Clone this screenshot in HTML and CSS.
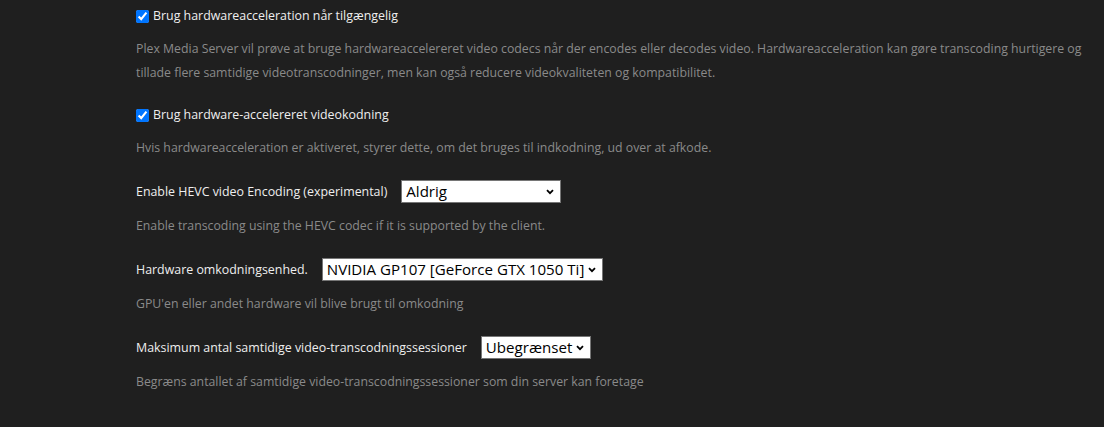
FILE: index.html
```html
<!DOCTYPE html>
<html lang="da">
<head>
<meta charset="utf-8">
<title>Transcoder</title>
<link rel="stylesheet" href="styles.css">
</head>
<body>
<div class="settings">
  <div class="group">
    <label class="row check-row"><input type="checkbox" checked><span class="label">Brug hardwareacceleration når tilgængelig</span></label>
    <p class="desc">Plex Media Server vil prøve at bruge hardwareaccelereret video codecs når der encodes eller decodes video. Hardwareacceleration kan gøre transcoding hurtigere og tillade flere samtidige videotranscodninger, men kan også reducere videokvaliteten og kompatibilitet.</p>
  </div>
  <div class="group">
    <label class="row check-row"><input type="checkbox" checked><span class="label">Brug hardware-accelereret videokodning</span></label>
    <p class="desc">Hvis hardwareacceleration er aktiveret, styrer dette, om det bruges til indkodning, ud over at afkode.</p>
  </div>
  <div class="group">
    <div class="row select-row"><span class="label">Enable HEVC video Encoding (experimental)</span>
      <select class="sel sel-wide"><option>Aldrig</option></select></div>
    <p class="desc">Enable transcoding using the HEVC codec if it is supported by the client.</p>
  </div>
  <div class="group">
    <div class="row select-row"><span class="label">Hardware omkodningsenhed.</span>
      <select class="sel"><option>NVIDIA GP107 [GeForce GTX 1050 Ti]</option></select></div>
    <p class="desc">GPU'en eller andet hardware vil blive brugt til omkodning</p>
  </div>
  <div class="group">
    <div class="row select-row"><span class="label">Maksimum antal samtidige video-transcodningssessioner</span>
      <select class="sel"><option>Ubegrænset</option></select></div>
    <p class="desc">Begræns antallet af samtidige video-transcodningssessioner som din server kan foretage</p>
  </div>
</div>
</body>
</html>
```
FILE: styles.css
```css
html, body {
  margin: 0;
  padding: 0;
  background: #1f1f1f;
  height: 100%;
}
body {
  font-family: "Open Sans", "Noto Sans", sans-serif;
  color: #eeeeee;
}
.settings {
  width: 960px;
  padding: 6px 0 0 136px;
}
.group {
  margin-bottom: 20px;
}
.row {
  display: flex;
  align-items: center;
}
.check-row {
  height: 20px;
}
.select-row {
  height: 23px;
}
.check-row input {
  margin: 0 4px 0 0;
  width: 13px;
  height: 13px;
  accent-color: #0075ff;
}
.label {
  color: #eeeeee;
  font-size: 12.4px;
  line-height: 20px;
}
.select-row .label {
  margin-right: 14px;
}
.desc {
  margin: 11px 0 0;
  color: #8a8a8a;
  font-size: 12.3px;
  line-height: 24px;
}
.sel {
  appearance: none;
  -webkit-appearance: none;
  font-family: "Open Sans", "Noto Sans", sans-serif;
  font-size: 15.1px;
  color: #000;
  background: #fff url("data:image/svg+xml;utf8,<svg xmlns='http://www.w3.org/2000/svg' width='8' height='6' viewBox='0 0 8 6'><path d='M1 1.2 L4 4.2 L7 1.2' fill='none' stroke='black' stroke-width='1.8'/></svg>") no-repeat right 6px center;
  border: 1px solid #767676;
  border-radius: 0;
  height: 23px;
  padding: 0 17px 0 4px;
  line-height: 21px;
}
.sel-wide {
  width: 160px;
}
```
